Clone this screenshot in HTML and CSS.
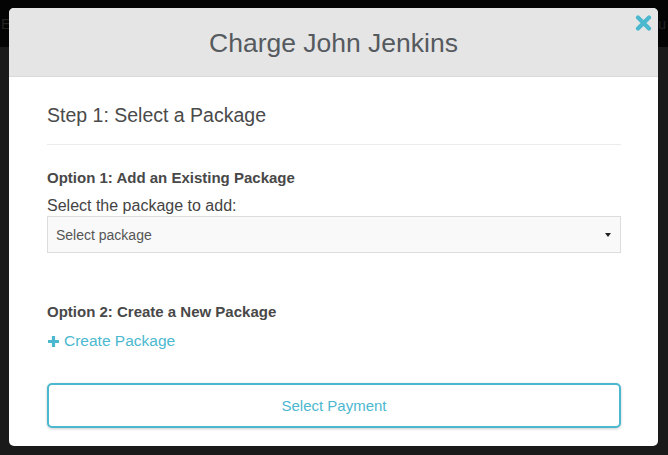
FILE: index.html
```html
<!DOCTYPE html>
<html>
<head>
<meta charset="utf-8">
<link rel="stylesheet" href="styles.css">
</head>
<body>
<div class="page">
  <div class="topbar"><span class="bg-left">E</span><span class="bg-right">u</span></div>
  <div class="modal">
    <div class="modal-header">
      <h1 class="modal-title">Charge John Jenkins</h1>
      <button class="close" aria-label="Close">
        <svg width="17" height="16" viewBox="0 0 17 16"><path d="M3 2.5 L14 13.5 M14 2.5 L3 13.5" stroke="#4cb8cf" stroke-width="4.2" stroke-linecap="round"/></svg>
      </button>
    </div>
    <div class="modal-body">
      <h2 class="step">Step 1: Select a Package</h2>
      <h3 class="option first">Option 1: Add an Existing Package</h3>
      <label class="label">Select the package to add:</label>
      <div class="select"><span>Select package</span><span class="caret"></span></div>
      <h3 class="option second">Option 2: Create a New Package</h3>
      <a class="create"><svg width="13" height="13" viewBox="0 0 13 13"><path d="M6.5 1 V12 M1 6.5 H12" stroke="#4cb8cf" stroke-width="3.2"/></svg>Create Package</a>
      <button class="pay">Select Payment</button>
    </div>
  </div>
</div>
</body>
</html>
```
FILE: styles.css
```css
html, body {
  margin: 0;
  padding: 0;
}
body {
  width: 668px;
  height: 455px;
  background: #1a1a1a;
  font-family: "Liberation Sans", Arial, sans-serif;
  overflow: hidden;
}
.page {
  position: relative;
  width: 668px;
  height: 455px;
}
.topbar {
  height: 47px;
  background: #040404;
  display: flex;
  justify-content: space-between;
  align-items: center;
  color: #222;
  font-size: 14px;
}
.bg-left { margin-left: 1px; }
.bg-right { margin-right: 2px; }
.modal {
  position: absolute;
  left: 9px;
  top: 8px;
  width: 649px;
  height: 438px;
  background: #fff;
  border-radius: 5px;
  overflow: hidden;
}
.modal-header {
  position: relative;
  height: 68px;
  background: #e5e5e5;
  border-bottom: 1px solid #d9d9d9;
  display: flex;
  align-items: center;
  justify-content: center;
}
.modal-title {
  margin: 0;
  font-weight: normal;
  font-size: 26.5px;
  color: #555a5f;
  padding-top: 3px;
}
.close {
  position: absolute;
  right: 6px;
  top: 7px;
  border: 0;
  background: none;
  padding: 0;
  width: 17px;
  height: 16px;
}
.close svg { display: block; }
.modal-body {
  padding: 0 37px 0 38px;
  display: flex;
  flex-direction: column;
}
.step {
  margin: 0;
  padding: 27px 0 18px;
  font-weight: normal;
  font-size: 19.5px;
  color: #4a4a4a;
  border-bottom: 1px solid #ececec;
  line-height: 22px;
}
.option {
  margin: 0;
  font-size: 15px;
  font-weight: bold;
  color: #484848;
  line-height: 18px;
}
.option.first { margin-top: 24px; }
.option.second { margin-top: 50px; }
.label {
  margin-top: 10px;
  font-size: 16px;
  color: #444;
  line-height: 18px;
}
.select {
  margin-top: 1px;
  height: 35px;
  border: 1px solid #dcdcdc;
  background: #f9f9f9;
  display: flex;
  align-items: center;
  justify-content: space-between;
  padding: 0 9px 0 8px;
  font-size: 14px;
  color: #555;
}
.caret {
  width: 0;
  height: 0;
  border-left: 3px solid transparent;
  border-right: 3px solid transparent;
  border-top: 4px solid #222;
}
.create {
  margin-top: 11px;
  display: flex;
  align-items: center;
  gap: 4px;
  font-size: 15.5px;
  color: #4cb8cf;
  line-height: 18px;
}
.create svg { display: block; }
.pay {
  margin-top: 33px;
  height: 45px;
  border: 2px solid #4cb8cf;
  border-radius: 5px;
  background: #fff;
  color: #4cb8cf;
  font-family: "Liberation Sans", Arial, sans-serif;
  font-size: 15px;
  box-shadow: 0 1px 3px rgba(0,0,0,0.2);
}
```
